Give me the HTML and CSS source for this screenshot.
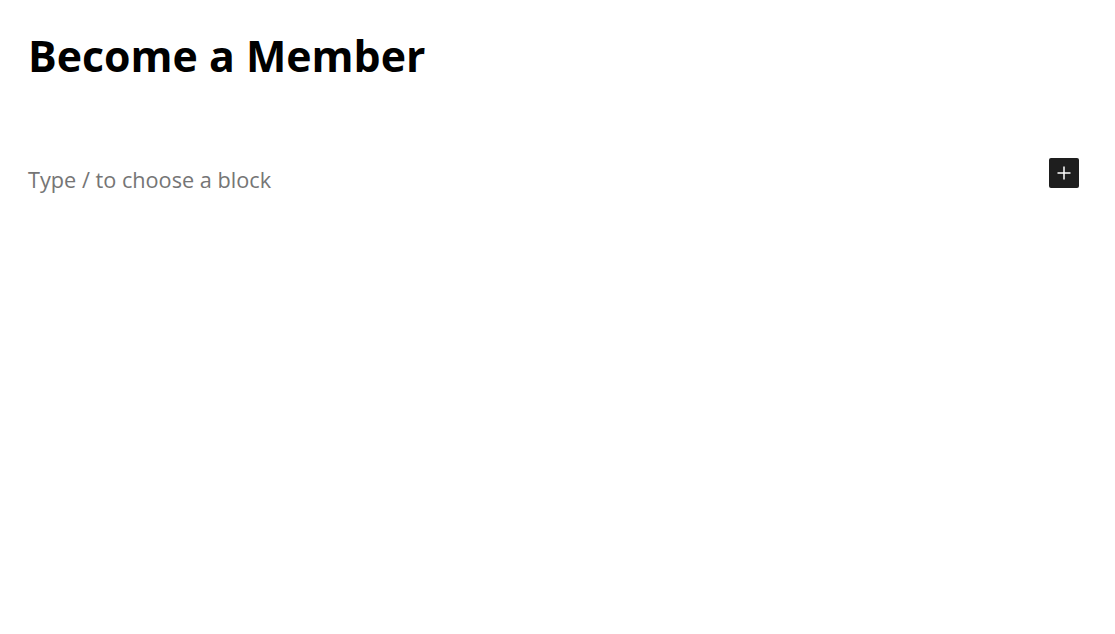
FILE: index.html
```html
<!DOCTYPE html>
<html>
<head>
<meta charset="utf-8">
<link rel="stylesheet" href="styles.css">
</head>
<body>
<div class="editor">
  <h1 class="title">Become a Member</h1>
  <div class="block-row">
    <p class="placeholder">Type / to choose a block</p>
    <button class="inserter" aria-label="Add block">
      <svg width="24" height="24" viewBox="0 0 24 24"><path d="M12 5.5v13M5.5 12h13" stroke="#fff" stroke-width="1.5" fill="none"/></svg>
    </button>
  </div>
</div>
</body>
</html>
```
FILE: styles.css
```css
html, body {
  margin: 0;
  padding: 0;
  background: #fff;
}
.editor {
  padding: 26px 36px 0 28px;
  font-family: "Open Sans", "Noto Sans", sans-serif;
}
.title {
  margin: 0;
  font-size: 42.8px;
  font-weight: 700;
  line-height: 60px;
  color: #000;
}
.block-row {
  display: flex;
  align-items: center;
  justify-content: space-between;
  margin-top: 79px;
}
.placeholder {
  margin: 0;
  font-size: 21.7px;
  line-height: 30px;
  color: #757575;
}
.inserter {
  width: 30px;
  height: 30px;
  padding: 0;
  border: none;
  border-radius: 2px;
  background: #1e1e1e;
  display: flex;
  align-items: center;
  justify-content: center;
  margin-top: -14px;
}
```
